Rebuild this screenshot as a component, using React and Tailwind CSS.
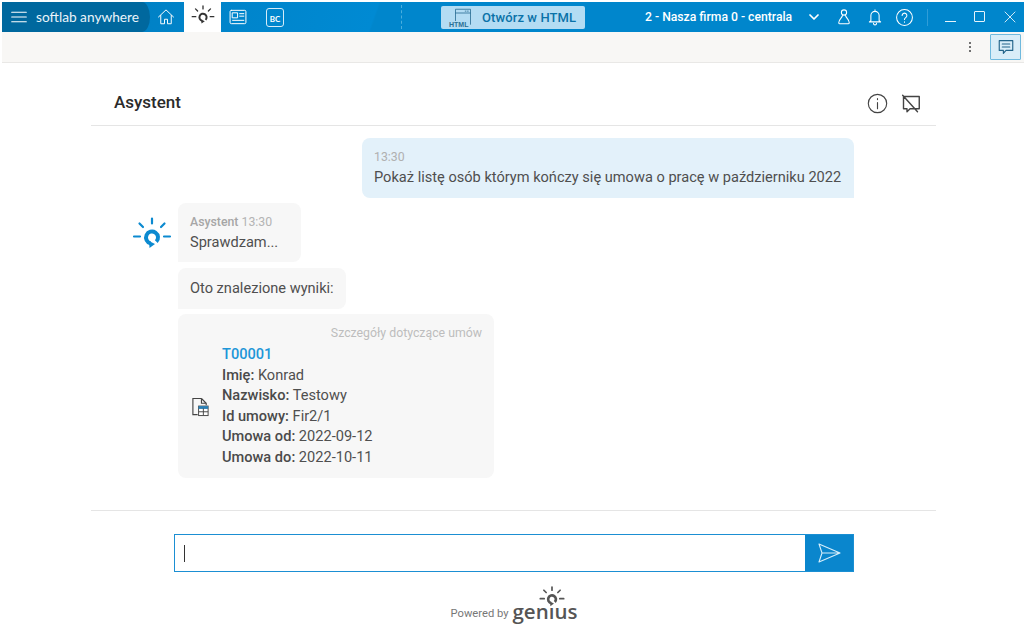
import React from "react";

const Sun = ({ className, color = "#0c8ad0", sw = 2.2, ring = 1.8 }) => (
  <svg viewBox="0 0 40 40" className={className} fill="none" stroke={color} strokeWidth={sw} strokeLinecap="round">
    <path d="M20 1.5v5M7.5 6.5l3.5 3.5M32.5 6.5 29 10M2 19.5h6M32 19.5h6" />
    <path d="M18.5 26.3A6 6 0 1 1 24.3 24.7" strokeWidth={sw * ring} strokeLinecap="butt" />
    <path d="M17 24l.5 7 5.5-4z" fill={color} stroke="none" />
  </svg>
);

const I = ({ className, children, sw = 1.4, color = "#fff", vb = "0 0 24 24" }) => (
  <svg viewBox={vb} className={className} fill="none" stroke={color} strokeWidth={sw} strokeLinecap="round" strokeLinejoin="round">
    {children}
  </svg>
);

function TopBar() {
  return (
    <div className="relative flex h-[30px] items-center overflow-hidden bg-[linear-gradient(110deg,#007cbe_0%,#008ad3_36.5%,#0086cc_36.7%,#0086cc_100%)] text-white">
      <div className="flex h-full w-[148px] shrink-0 items-center gap-[9px] rounded-br-[8px_15px] rounded-tr-[8px_15px] bg-[#00689e] pl-[9px]">
        <I className="h-[16px] w-[16px]" sw={1.6}>
          <path d="M1 5h22M1 12h22M1 19h22" />
        </I>
        <span className="whitespace-nowrap font-['Lato',sans-serif] text-[13.7px] leading-none text-[#eaf4fa]">softlab anywhere</span>
      </div>
      <I className="ml-[7px] h-[18px] w-[18px]" sw={1.3}>
        <path d="M2 12 12 2.5 22 12M5 10v11h5v-6h4v6h5V10" />
      </I>
      <div className="ml-[9px] flex h-[30px] w-[37px] items-center justify-center bg-white">
        <Sun className="h-[24px] w-[24px]" color="#333" sw={2.2} ring={1.5} />
      </div>
      <I className="ml-[7px] h-[20px] w-[20px]" sw={1.2}>
        <rect x="2.5" y="4" width="19" height="16" rx="1.5" />
        <rect x="5.5" y="7" width="6" height="6" />
        <path d="M14 8h5M14 11h5M5.5 16h13.5" />
      </I>
      <div className="ml-[18px] flex h-[19px] w-[18px] items-center justify-center rounded-[3px] border border-[#d5ecf8] pt-[4px] font-['Lato',sans-serif] text-[8px] font-bold leading-none">BC</div>

      <div className="ml-[117px] h-[24px] border-l border-dashed border-[#4aaede]" />
      <div className="ml-[39px] flex h-[23px] w-[144px] items-center gap-[9px] rounded-[2px] bg-[#b3dcf3] pl-[8px] text-[#0a72a8]">
        <div className="relative h-[21px] w-[24px]">
          <I className="absolute right-0 top-0 h-[18px] w-[20px]" color="#2a6f94" sw={1.1}>
            <path d="M2 20V3h20v20M2 8h20M15 5.5h1M18 5.5h1" />
          </I>
          <span className="absolute bottom-0 left-0 bg-[#b3dcf3] font-['Liberation_Sans',sans-serif] text-[7px] font-bold leading-none text-[#2a6f94]">HTML</span>
        </div>
        <span className="font-['Roboto',sans-serif] text-[13px] font-medium leading-none tracking-[0.1px]">Otwórz w HTML</span>
      </div>

      <span className="ml-[60px] whitespace-nowrap font-['Roboto',sans-serif] text-[12.2px] font-medium leading-none">2 - Nasza firma 0 - centrala</span>
      <I className="ml-[16px] h-[12px] w-[12px]" sw={3.5}>
        <path d="M4 8l8 8 8-8" />
      </I>
      <I className="ml-[15px] h-[18px] w-[18px]" sw={1.4}>
        <circle cx="12" cy="6" r="3.5" />
        <path d="M10 10c-1 4-5 5-5 9.5 0 1 .5 1.5 1.5 1.5h11c1 0 1.5-.5 1.5-1.5 0-4.5-4-5.5-5-9.5" />
      </I>
      <I className="ml-[13px] h-[18px] w-[18px]" sw={1.4}>
        <path d="M12 2.5v1.5M6.5 17V10a5.5 5.5 0 0 1 11 0v7l2 1.5h-15zM10 20.5a2 2 0 0 0 4 0" />
      </I>
      <I className="ml-[11px] h-[19px] w-[19px]" sw={1.3}>
        <circle cx="12" cy="12" r="10" />
        <path d="M9 9.5a3 3 0 1 1 4.5 2.6c-1 .6-1.5 1.2-1.5 2.4M12 17.5v.4" />
      </I>
      <div className="ml-[13px] h-[17px] border-l border-[#2f9dd8]" />
      <div className="ml-[17px] h-px w-[11px] translate-y-[4px] bg-[#e6f4fb]" />
      <div className="ml-[18px] h-[11px] w-[11px] -translate-y-[1px] rounded-[1px] border border-[#e6f4fb]" />
      <I className="ml-[19px] h-[12px] w-[12px]" sw={1.8} color="#e6f4fb">
        <path d="M2 2l20 20M22 2 2 22" />
      </I>
    </div>
  );
}

function ToolBar() {
  return (
    <div className="flex h-[31px] items-center justify-end border-b border-[#e9e8e6] bg-[#f8f7f5] pr-[3px]">
      <div className="mr-[19px] flex flex-col gap-[2px]">
        <span className="h-[2px] w-[2px] rounded-full bg-[#444]" />
        <span className="h-[2px] w-[2px] rounded-full bg-[#444]" />
        <span className="h-[2px] w-[2px] rounded-full bg-[#444]" />
      </div>
      <div className="flex h-[26px] w-[31px] items-center justify-center rounded-[1px] border border-[#6fb9de] bg-[#d9edf8]">
        <I className="h-[18px] w-[18px]" color="#22648a" sw={1.5}>
          <path d="M3 3.5h18v13H12l-3.5 4v-4H3zM7 8h10M7 12h10" />
        </I>
      </div>
    </div>
  );
}

function Row({ k, v }) {
  return (
    <div className="h-[20.6px] leading-[20.6px]">
      <span className="font-medium text-[#4a4a4a]">{k}:</span> <span>{v}</span>
    </div>
  );
}

export default function App() {
  return (
    <div className="flex h-[635px] w-[1024px] flex-col overflow-hidden bg-white pl-[2px] pt-[2px] font-['Roboto',sans-serif] text-[#4f4f4f]">
      <TopBar />
      <ToolBar />
      <div className="ml-[89px] mr-[88px] flex h-[63px] items-end justify-between border-b border-[#e5e5e5] pb-[11px] pl-[23px] pr-[15px]">
        <h1 className="text-[17px] font-medium leading-[24px] text-[#2b2b2b]">Asystent</h1>
        <div className="flex items-center gap-[12px]">
          <I className="h-[21px] w-[21px]" color="#444" sw={1.3}>
            <circle cx="12" cy="12" r="10.5" />
            <path d="M12 11v7M12 6.5v1" />
          </I>
          <I className="h-[21px] w-[21px]" color="#444" sw={1.6}>
            <path d="M4 4h18v14H11.5L8 21.5V18H4zM3 2.5l17 19" />
          </I>
        </div>
      </div>

      <div className="relative h-[384px]">
        <div className="ml-[360px] mt-[12px] w-[492px] rounded-[8px] rounded-br-none bg-[#e3f1fa] px-[12px] pb-[10px] pt-[11px] text-[14.6px] leading-[21px]">
          <div className="text-[12.3px] leading-[16px] text-[#b0b0b0]">13:30</div>
          <div className="mt-[2px] whitespace-nowrap">Pokaż listę osób którym kończy się umowa o pracę w październiku 2022</div>
        </div>

        <div className="mt-[5px] flex">
          <Sun className="ml-[130px] mt-[14px] h-[40px] w-[40px]" />
          <div className="ml-[6px] flex flex-col items-start text-[14.6px]">
            <div className="rounded-[8px] rounded-bl-none bg-[#f7f7f7] pb-[7px] pl-[12px] pr-[23px] pt-[11px]">
              <div className="text-[12.3px] leading-[16px] text-[#b4b4b4]">
                <span className="font-medium text-[#a6a6a6]">Asystent</span> 13:30
              </div>
              <div className="leading-[25px]">Sprawdzam...</div>
            </div>
            <div className="mt-[6px] rounded-[8px] rounded-bl-none bg-[#f7f7f7] px-[12px] py-[8px] leading-[25px]">Oto znalezione wyniki:</div>
            <div className="mt-[5px] w-[316px] rounded-[8px] bg-[#f7f7f7] pb-[10px] pl-[13px] pr-[12px] pt-[11px]">
              <div className="text-right text-[12.3px] leading-[16px] text-[#bdbdbd]">Szczegóły dotyczące umów</div>
              <div className="mt-[3px] flex items-center gap-[12px]">
                <svg viewBox="0 0 20 22" className="mt-[4px] h-[21px] w-[19px]" fill="none">
                  <path d="M11 1.5H2v17h5M11 1.5l5 5v2M11 1.5v5h5" stroke="#444" strokeWidth="1.2" />
                  <rect x="8" y="9.5" width="10" height="10" fill="#fff" stroke="#444" strokeWidth="1" />
                  <rect x="8" y="9.5" width="10" height="3" fill="#2a7fb5" />
                  <path d="M13 12v7M8 15.5h10" stroke="#444" strokeWidth="1" />
                </svg>
                <div>
                  <div className="h-[20.6px] font-medium leading-[20.6px] text-[#1e96d8]">T00001</div>
                  <Row k="Imię" v="Konrad" />
                  <Row k="Nazwisko" v="Testowy" />
                  <Row k="Id umowy" v="Fir2/1" />
                  <Row k="Umowa od" v="2022-09-12" />
                  <Row k="Umowa do" v="2022-10-11" />
                </div>
              </div>
            </div>
          </div>
        </div>
      </div>

      <div className="ml-[89px] mr-[88px] border-t border-[#e5e5e5] pt-[23px]">
        <div className="ml-[83px] flex h-[38px] w-[680px] items-stretch border border-[#1b8fd3]">
          <div className="flex flex-1 items-center pl-[9px]">
            <span className="h-[17px] w-px bg-[#333]" />
          </div>
          <div className="flex w-[48px] items-center justify-center bg-[#0a86cd]">
            <I className="h-[24px] w-[24px]" color="#d7eefa" sw={1.1}>
              <path d="M2 3l21 9L2 21l3-9zM5 12h18" />
            </I>
          </div>
        </div>
      </div>

      <div className="mt-[27px] flex items-end justify-center pl-[2px]">
        <span className="mb-[4px] mr-[4px] text-[11.2px] leading-none text-[#777]">Powered by</span>
        <div className="relative font-['Open_Sans',sans-serif] text-[20.5px] font-semibold leading-[24px] text-[#555]">
          gen<span className="text-[#555]">ı</span>us
          <Sun className="absolute -top-[13px] left-[26px] h-[26px] w-[26px]" color="#555" sw={2.6} ring={1.6} />
        </div>
      </div>
    </div>
  );
}
